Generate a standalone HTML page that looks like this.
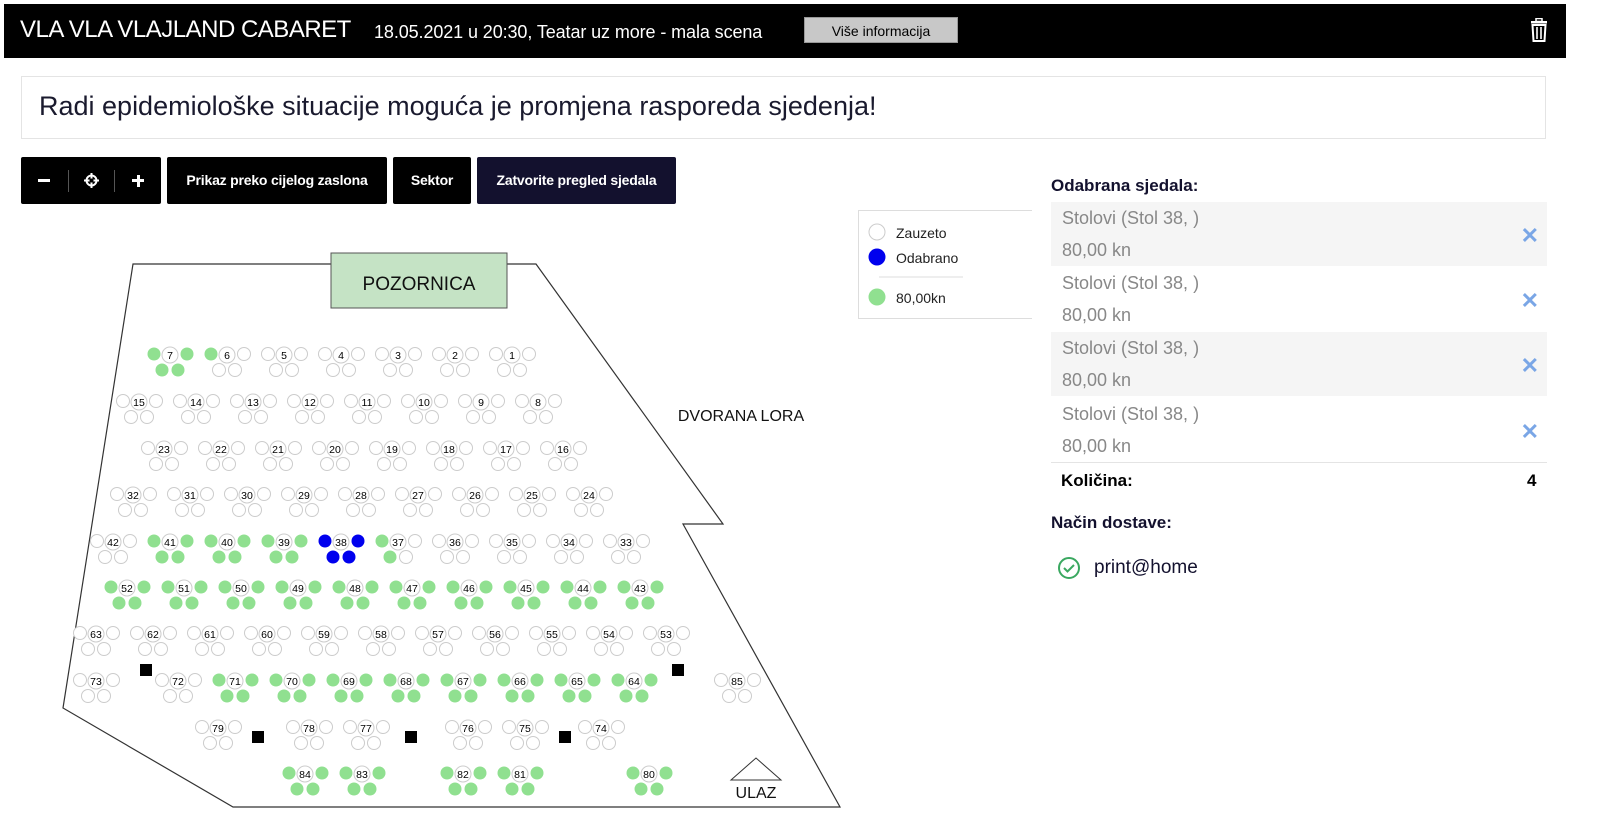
<!DOCTYPE html>
<html><head><meta charset="utf-8"><style>
body{margin:0;width:1600px;height:830px;background:#fff;font-family:"Liberation Sans",sans-serif;position:relative;overflow:hidden}
.hdr{position:absolute;left:4px;top:4px;width:1562px;height:54px;background:#000;color:#fff}
.t1{position:absolute;left:16px;top:12px;font-size:24px;letter-spacing:-0.5px}
.t2{position:absolute;left:370px;top:18px;font-size:18px;letter-spacing:-0.1px}
.more{position:absolute;left:800px;top:13px;width:154px;height:26px;background:#c8c8c8;color:#000;font-size:14px;text-align:center;line-height:27px;border:1px solid #999;box-sizing:border-box}
.notice{position:absolute;left:21px;top:76px;width:1525px;height:63px;border:1px solid #e4e4e4;box-sizing:border-box;font-size:27px;color:#1a1a2e;padding:14px 0 0 17px}
.btn{position:absolute;top:157px;height:47px;background:#000;color:#fff;font-size:14px;font-weight:bold;line-height:47px;text-align:center;border-radius:2px;letter-spacing:-0.2px}
.r{position:absolute;left:1051px;font-family:"Liberation Sans",sans-serif}
.item{position:absolute;left:1051px;width:496px;height:64px;color:#888;font-size:18px}
.item div{position:absolute;left:11px}
.x{position:absolute;right:8px;top:21px;color:#7aa6e6;font-size:22px;font-weight:bold}
</style></head><body>
<div class="hdr">
<div class="t1">VLA VLA VLAJLAND CABARET</div>
<div class="t2">18.05.2021 u 20:30, Teatar uz more - mala scena</div>
<div class="more">Više informacija</div>
<svg style="position:absolute;left:1524px;top:14px" width="22" height="24" viewBox="0 0 22 24"><rect x="3" y="3" width="16" height="2.5" fill="#fff"/><rect x="8" y="0.5" width="6" height="3" fill="none" stroke="#fff" stroke-width="1.5"/><path d="M4.5 7h13l-1 16h-11z" fill="none" stroke="#fff" stroke-width="2"/><path d="M9 9v12M13 9v12" stroke="#fff" stroke-width="1.6"/></svg>
</div>
<div class="notice">Radi epidemiološke situacije moguća je promjena rasporeda sjedenja!</div>
<div class="btn" style="left:21px;width:140px">
<span style="position:absolute;left:17px;top:13px;width:12px;height:3px;background:#fff;margin-top:9px"></span>
<span style="position:absolute;left:47px;top:13px;width:1px;height:22px;background:#555"></span>
<svg style="position:absolute;left:63px;top:16px" width="15" height="15" viewBox="0 0 15 15"><circle cx="7.5" cy="7.5" r="5" fill="none" stroke="#fff" stroke-width="2"/><path d="M7.5 0v15M0 7.5h15" stroke="#fff" stroke-width="2"/><circle cx="7.5" cy="7.5" r="2" fill="#000"/></svg>
<span style="position:absolute;left:93px;top:13px;width:1px;height:22px;background:#555"></span>
<span style="position:absolute;left:111px;top:22px;width:12px;height:3px;background:#fff"></span>
<span style="position:absolute;left:115.5px;top:17.5px;width:3px;height:12px;background:#fff"></span>
</div>
<div class="btn" style="left:167px;width:220px">Prikaz preko cijelog zaslona</div>
<div class="btn" style="left:393px;width:78px">Sektor</div>
<div class="btn" style="left:477px;width:199px;background:#13112e">Zatvorite pregled sjedala</div>

<svg style="position:absolute;left:0;top:0" width="1040" height="830" id="map">
<polygon points="133,264 536,264 723,524 683,524 840,807 233,807 63,708" fill="#fff" stroke="#333" stroke-width="1.2"/>
<rect x="331" y="253" width="176" height="55" fill="#c5e3c5" stroke="#555"/>
<text x="419" y="290" font-size="19" text-anchor="middle" fill="#111">POZORNICA</text>
<text x="741" y="421" font-size="16" text-anchor="middle" fill="#111">DVORANA LORA</text>
<polygon points="731,780 756,758 781,780" fill="#fff" stroke="#333"/>
<text x="756" y="798" font-size="16" text-anchor="middle" fill="#111">ULAZ</text>
<g fill="#000"><rect x="140" y="664" width="12" height="12"/><rect x="672" y="664" width="12" height="12"/><rect x="252" y="731" width="12" height="12"/><rect x="405" y="731" width="12" height="12"/><rect x="559" y="731" width="12" height="12"/></g>
<g id="seats"></g>
</svg>

<div style="position:absolute;left:858px;top:210px;width:174px;height:109px;border:1px solid #ddd;border-right:none;box-sizing:border-box">
<svg width="174" height="109" style="position:absolute;left:0;top:0"><circle cx="18" cy="21" r="8" fill="#fff" stroke="#ccc"/><circle cx="18" cy="46" r="8.5" fill="#0000ee"/><line x1="20" y1="66" x2="104" y2="66" stroke="#ddd"/><circle cx="18" cy="86" r="8.5" fill="#90e090"/>
<text x="37" y="27" font-size="14" fill="#222">Zauzeto</text><text x="37" y="52" font-size="14" fill="#222">Odabrano</text><text x="37" y="92" font-size="14" fill="#222">80,00kn</text></svg>
</div>

<div class="r" style="top:176px;font-size:17px;font-weight:bold;color:#13112e">Odabrana sjedala:</div>
<div class="item" style="top:202px;background:#f5f5f5"><div style="top:6px">Stolovi (Stol 38, )</div><div style="top:38px">80,00 kn</div><span class="x">✕</span></div>
<div class="item" style="top:267px"><div style="top:6px">Stolovi (Stol 38, )</div><div style="top:38px">80,00 kn</div><span class="x">✕</span></div>
<div class="item" style="top:332px;background:#f5f5f5"><div style="top:6px">Stolovi (Stol 38, )</div><div style="top:38px">80,00 kn</div><span class="x">✕</span></div>
<div class="item" style="top:398px;border-bottom:1px solid #e4e4e4"><div style="top:6px">Stolovi (Stol 38, )</div><div style="top:38px">80,00 kn</div><span class="x">✕</span></div>
<div class="r" style="top:471px;left:1061px;font-size:17px;font-weight:bold;color:#000">Količina:</div>
<div class="r" style="top:471px;left:1527px;font-size:17px;font-weight:bold;color:#000">4</div>
<div class="r" style="top:513px;font-size:17px;font-weight:bold;color:#13112e">Način dostave:</div>
<svg style="position:absolute;left:1057px;top:556px" width="24" height="24"><circle cx="12" cy="12" r="10" fill="none" stroke="#3aa860" stroke-width="2"/><path d="M7 12l3.5 3.5L17 9" fill="none" stroke="#3aa860" stroke-width="2"/></svg>
<div class="r" style="top:557px;left:1094px;font-size:19px;color:#13112e">print@home</div>

<script>
var G='#90e090',B='#0000ee',W='#fff';
var rows=[
[354,[[7,170,'a'],[6,227,'l'],[5,284],[4,341],[3,398],[2,455],[1,512]]],
[401,[[15,139],[14,196],[13,253],[12,310],[11,367],[10,424],[9,481],[8,538]]],
[448,[[23,164],[22,221],[21,278],[20,335],[19,392],[18,449],[17,506],[16,563]]],
[494,[[32,133],[31,190],[30,247],[29,304],[28,361],[27,418],[26,475],[25,532],[24,589]]],
[541,[[42,113],[41,170,'a'],[40,227,'a'],[39,284,'a'],[38,341,'b'],[37,398,'m'],[36,455],[35,512],[34,569],[33,626]]],
[587,[[52,127,'a'],[51,184,'a'],[50,241,'a'],[49,298,'a'],[48,355,'a'],[47,412,'a'],[46,469,'a'],[45,526,'a'],[44,583,'a'],[43,640,'a']]],
[633,[[63,96],[62,153],[61,210],[60,267],[59,324],[58,381],[57,438],[56,495],[55,552],[54,609],[53,666]]],
[680,[[73,96],[72,178],[71,235,'a'],[70,292,'a'],[69,349,'a'],[68,406,'a'],[67,463,'a'],[66,520,'a'],[65,577,'a'],[64,634,'a'],[85,737]]],
[727,[[79,218],[78,309],[77,366],[76,468],[75,525],[74,601]]],
[773,[[84,305,'a'],[83,362,'a'],[82,463,'a'],[81,520,'a'],[80,649,'a']]]];
var s='';
function c(x,y,r,f){return '<circle cx="'+x+'" cy="'+y+'" r="'+r+'" fill="'+f+'" stroke="'+(f==W?'#ccc':'none')+'" stroke-width="1"/>';}
rows.forEach(function(R){var y=R[0];R[1].forEach(function(t){var x=t[1],m=t[2]||'';
var L=W,Rr=W,b1=W,b2=W;
if(m=='a'){L=Rr=b1=b2=G}if(m=='l'){L=G}if(m=='b'){L=Rr=b1=b2=B}if(m=='m'){L=G;b1=G}
s+=c(x-16,y,6.5,L)+c(x+17,y,6.5,Rr)+c(x-8,y+16,6.5,b1)+c(x+8,y+16,6.5,b2)+c(x,y+1,8,W);
s+='<text x="'+x+'" y="'+(y+5)+'" font-size="10.5" text-anchor="middle" fill="#000">'+t[0]+'</text>';});});
document.getElementById('seats').innerHTML=s;
</script>
</body></html>
